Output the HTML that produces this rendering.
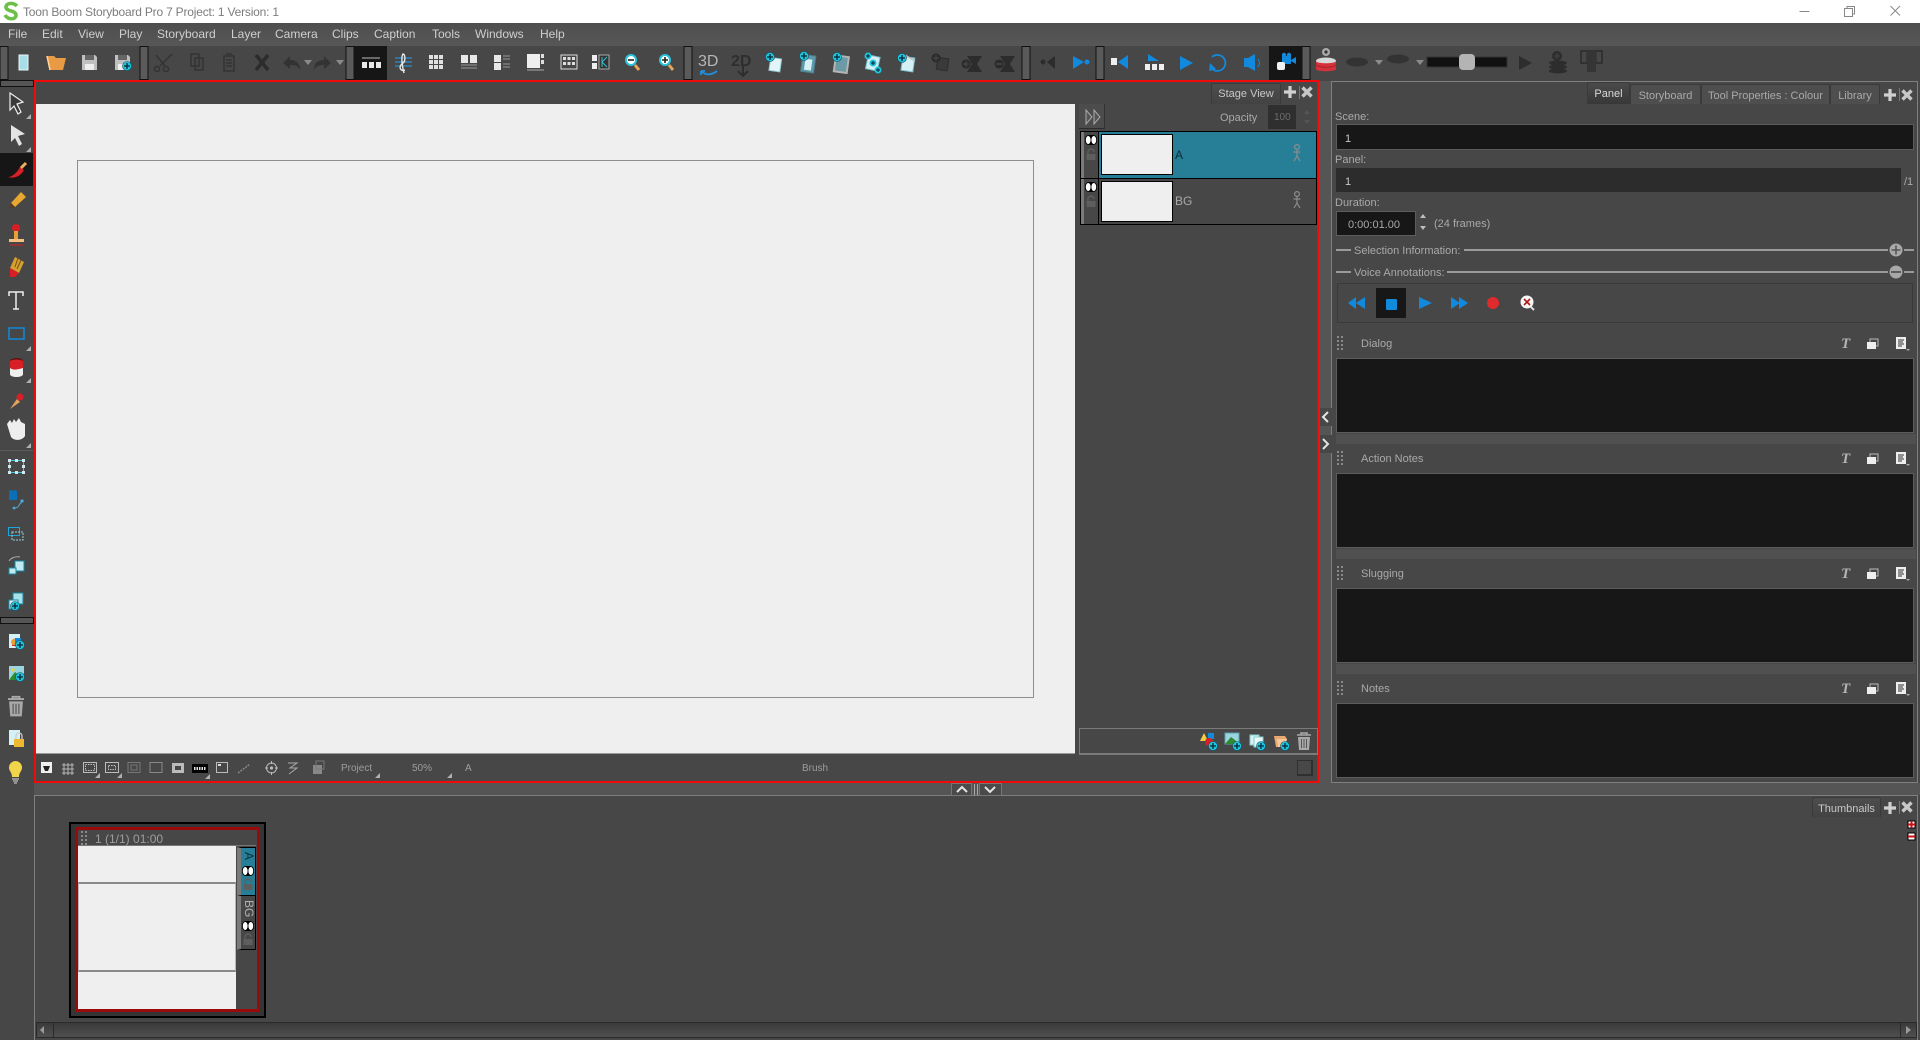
<!DOCTYPE html>
<html lang="en">
<head>
<meta charset="utf-8">
<title>Toon Boom Storyboard Pro 7</title>
<style>
html,body{margin:0;padding:0;width:1920px;height:1040px;overflow:hidden;background:#474747;font-family:"Liberation Sans",sans-serif}
.p{position:absolute;box-sizing:border-box}
.t{position:absolute;white-space:nowrap;font-size:11px;line-height:14px;color:#a9a9a9;margin-top:1px}
.m{position:absolute;top:27px;font-size:12px;line-height:14px;color:#cfcfcf;white-space:nowrap}
.tab{position:absolute;box-sizing:border-box;background:linear-gradient(#4d4d4d,#434343);border:1px solid #3a3a3a;border-bottom:0;border-radius:2px 2px 0 0;font-size:11px;color:#a9a9a9;text-align:center;white-space:nowrap}
.ta{position:absolute;box-sizing:border-box;left:1336px;width:578px;height:75px;background:#171717;border:1px solid #5c5c5c}
.bar{position:absolute;left:1336px;width:580px;height:10px;background:#505050}
svg{position:absolute;left:0;top:0}
</style>
</head>
<body>
<!-- title bar -->
<div class="p" style="left:0;top:0;width:1920px;height:23px;background:#fff"></div>
<div class="t" style="left:23px;top:4px;font-size:12px;color:#7c7c7c;letter-spacing:-.2px">Toon Boom Storyboard Pro 7 Project: 1 Version: 1</div>
<!-- menu -->
<div class="p" style="left:0;top:23px;width:1920px;height:23px;background:linear-gradient(#4e4e4e,#575757)"></div>
<div class="m" style="left:8px">File</div><div class="m" style="left:42px">Edit</div><div class="m" style="left:78px">View</div><div class="m" style="left:119px">Play</div><div class="m" style="left:157px">Storyboard</div><div class="m" style="left:231px">Layer</div><div class="m" style="left:275px">Camera</div><div class="m" style="left:332px">Clips</div><div class="m" style="left:374px">Caption</div><div class="m" style="left:432px">Tools</div><div class="m" style="left:475px">Windows</div><div class="m" style="left:540px">Help</div>
<!-- toolbar -->
<div class="p" style="left:0;top:46px;width:1920px;height:34px;background:#474747"></div>
<div class="p" style="left:354px;top:46px;width:33px;height:34px;background:#161616"></div>
<div class="p" style="left:1269px;top:46px;width:33px;height:34px;background:#161616"></div>

<!-- stage frame -->
<div class="p" style="left:34px;top:80px;width:1285px;height:703px;background:#474747;border:2px solid #f00a0a"></div>
<div class="p" style="left:36px;top:104px;width:1039px;height:650px;background:#efefef"></div>
<div class="p" style="left:77px;top:160px;width:957px;height:538px;border:1px solid #8e8e8e"></div>
<div class="p" style="left:36px;top:753px;width:1039px;height:1px;background:#999"></div>
<div class="tab" style="left:1211px;top:83px;width:70px;height:21px;line-height:21px;color:#c8c8c8">Stage View</div>
<div class="p" style="left:1079px;top:104px;width:26px;height:25px;background:#4c4c4c;border-bottom:1px solid #2c2c2c;border-right:1px solid #333"></div>
<div class="t" style="left:1220px;top:110px">Opacity</div>
<div class="p" style="left:1268px;top:105px;width:28px;height:24px;background:#2f2f2f"></div>
<div class="t" style="left:1274px;top:110px;font-size:10px;color:#6d6d6d">100</div>
<!-- layers -->
<div class="p" style="left:1080px;top:131px;width:237px;height:94px;background:#474747;border:1px solid #000"></div>
<div class="p" style="left:1081px;top:132px;width:3px;height:92px;background:#7a7a7a"></div>
<div class="p" style="left:1098px;top:132px;width:218px;height:46px;background:#267f96"></div>
<div class="p" style="left:1098px;top:132px;width:1px;height:92px;background:#000"></div>
<div class="p" style="left:1081px;top:178px;width:235px;height:1px;background:#000"></div>
<div class="p" style="left:1101px;top:134px;width:72px;height:41px;background:#efefef;border:1px solid #000"></div>
<div class="p" style="left:1101px;top:181px;width:72px;height:41px;background:#efefef;border:1px solid #000"></div>
<div class="t" style="left:1175px;top:147px;color:#0d2c36;font-size:12px">A</div>
<div class="t" style="left:1175px;top:193px;color:#a9a9a9;font-size:12px">BG</div>
<!-- layer bottom bar -->
<div class="p" style="left:1079px;top:728px;width:239px;height:27px;border:1px solid #7b7b7b;border-bottom-width:2px"></div>
<div class="p" style="left:1297px;top:760px;width:16px;height:16px;border:1px solid #2f2f2f;border-right-width:2px;border-bottom-width:2px;background:#484848"></div>
<div class="t" style="left:341px;top:761px;font-size:10px;color:#9d9d9d">Project</div>
<div class="t" style="left:412px;top:761px;font-size:10px;color:#9d9d9d">50%</div>
<div class="t" style="left:465px;top:761px;font-size:10px;color:#9d9d9d">A</div>
<div class="t" style="left:802px;top:761px;font-size:10px;color:#9d9d9d">Brush</div>

<!-- splitters -->
<div class="p" style="left:1319px;top:81px;width:12px;height:702px;background:#555"></div>
<div class="p" style="left:34px;top:783px;width:1886px;height:12px;background:#555"></div>
<div class="p" style="left:34px;top:795px;width:1884px;height:245px;background:#474747;border:1px solid #7f7f7f;border-width:1px 1px 0 1px"></div>

<!-- right panel -->
<div class="p" style="left:1331px;top:81px;width:587px;height:702px;background:#474747;border:1px solid #7f7f7f"></div>
<div class="tab" style="left:1587px;top:82px;width:43px;height:22px;line-height:22px;color:#d8d8d8;background:linear-gradient(#4a4a4a,#383838)">Panel</div>
<div class="tab" style="left:1630px;top:84px;width:71px;height:20px;line-height:22px;background:#4e4e4e">Storyboard</div>
<div class="tab" style="left:1701px;top:84px;width:129px;height:20px;line-height:22px;background:#4e4e4e">Tool Properties : Colour</div>
<div class="tab" style="left:1830px;top:84px;width:50px;height:20px;line-height:22px;background:#4e4e4e">Library</div>
<div class="t" style="left:1335px;top:109px">Scene:</div>
<div class="p" style="left:1336px;top:124px;width:578px;height:26px;background:#171717;border:1px solid #5c5c5c"></div>
<div class="t" style="left:1345px;top:131px;color:#c8c8c8">1</div>
<div class="t" style="left:1335px;top:152px">Panel:</div>
<div class="p" style="left:1336px;top:168px;width:565px;height:24px;background:#2c2c2c"></div>
<div class="t" style="left:1345px;top:174px;color:#c8c8c8">1</div>
<div class="t" style="left:1904px;top:174px">/1</div>
<div class="t" style="left:1335px;top:195px">Duration:</div>
<div class="p" style="left:1336px;top:211px;width:80px;height:25px;background:#171717;border:1px solid #5c5c5c"></div>
<div class="t" style="left:1348px;top:217px;color:#a9a9a9">0:00:01.00</div>
<div class="t" style="left:1434px;top:216px">(24 frames)</div>
<div class="t" style="left:1354px;top:243px">Selection Information:</div>
<div class="t" style="left:1354px;top:265px">Voice Annotations:</div>
<div class="p" style="left:1337px;top:283px;width:576px;height:40px;border:1px solid #3a3a3a;border-top-width:1px"></div>
<div class="p" style="left:1376px;top:288px;width:30px;height:30px;background:#171717"></div>

<div class="t" style="left:1361px;top:336px">Dialog</div>
<div class="ta" style="top:358px"></div><div class="bar" style="top:434px"></div>
<div class="t" style="left:1361px;top:451px">Action Notes</div>
<div class="ta" style="top:473px"></div><div class="bar" style="top:549px"></div>
<div class="t" style="left:1361px;top:566px">Slugging</div>
<div class="ta" style="top:588px"></div><div class="bar" style="top:664px"></div>
<div class="t" style="left:1361px;top:681px">Notes</div>
<div class="ta" style="top:703px"></div>

<!-- thumbnails -->
<div class="tab" style="left:1812px;top:797px;width:69px;height:20px;line-height:22px;color:#c8c8c8">Thumbnails</div>
<div class="p" style="left:69px;top:822px;width:197px;height:196px;background:#353535;border:2px solid #000"></div>
<div class="p" style="left:75px;top:827px;width:185px;height:185px;background:#474747;border:3px solid #9a0a0a"></div>
<div class="p" style="left:78px;top:846px;width:158px;height:163px;background:#efefef"></div>
<div class="p" style="left:78px;top:845px;width:178px;height:1px;background:#777"></div>
<div class="p" style="left:78px;top:882px;width:158px;height:90px;border-style:solid;border-color:#8a8a8a #b8b8b8;border-width:2px 1px"></div>
<div class="t" style="left:95px;top:831px;font-size:12px;color:#9d9d9d">1 (1/1) 01:00</div>
<div class="p" style="left:237px;top:847px;width:19px;height:49px;background:#267f96;border:1px solid #000;border-left:4px solid #7a7a7a"></div>
<div class="p" style="left:237px;top:895px;width:19px;height:55px;background:#474747;border:1px solid #000;border-left:4px solid #7a7a7a"></div>
<!-- scrollbar -->
<div class="p" style="left:36px;top:1022px;width:1881px;height:16px;background:linear-gradient(#3a3a3a,#4f4f4f);border:1px solid #2a2a2a"></div>
<div class="p" style="left:53px;top:1022px;width:1px;height:16px;background:#2a2a2a"></div>
<div class="p" style="left:1900px;top:1022px;width:1px;height:16px;background:#2a2a2a"></div>

<svg width="1920" height="1040" viewBox="0 0 1920 1040" xmlns="http://www.w3.org/2000/svg">
<defs>
<g id="pb"><circle r="4.5" fill="#1fc3dd" stroke="#10505f" stroke-width=".6"/><path d="M-3 0H3M0-3V3" stroke="#0a2530" stroke-width="1.3"/></g>
<g id="pbd"><circle r="4.5" fill="#2a2a2a"/><path d="M-3 0H3M0-3V3" stroke="#474747" stroke-width="1.3"/></g>
<g id="handleV"><rect x="0" y="0" width="8" height="33" fill="#5a5a5a" stroke="#111" stroke-width="1"/></g>
<g id="tri"><path d="M5 0V5H0Z" fill="#b0b0b0"/></g>
<g id="eye"><rect x="-6" y="-5" width="12" height="10" rx="4" fill="#000"/><ellipse cx="-2.8" cy="0" rx="2.4" ry="4" fill="#fff"/><ellipse cx="2.8" cy="0" rx="2.4" ry="4" fill="#fff"/></g>
<g id="lock"><rect x="-4.5" y="-1" width="9" height="6" fill="#5e5e5e"/><path d="M-3-1V-3A3 3 0 0 1 3-3" fill="none" stroke="#5e5e5e" stroke-width="1.4"/></g>
<g id="man" fill="none" stroke="#8d8d8d" stroke-width="1.2"><circle cy="-6" r="2.4"/><path d="M0-3.5V3M-3.5-1H3.5M0 3L-3 8M0 3L3 8"/></g>
<g id="plusW"><path d="M-6 0H6M0-6V6" stroke="#d0d0d0" stroke-width="3.2"/></g>
<g id="xW"><path d="M-4.500-4.500L4.500 4.500M4.500-4.500L-4.500 4.500" stroke="#c8c8c8" stroke-width="3.4"/></g>
<g id="T"><text x="-5" y="5" font-family="Liberation Serif,serif" font-size="15" font-style="italic" font-weight="700" fill="#b4b4b4">T</text></g>
<g id="win"><rect x="-3" y="-5" width="8" height="7" fill="none" stroke="#bbb"/><rect x="-6" y="-2" width="9" height="7" fill="#eee"/></g>
<g id="docI"><rect x="-5" y="-6" width="10" height="12" fill="#eee"/><path d="M-3-3H3M-3-1H2M-3 1H3M-3 3H1" stroke="#333"/><path d="M5 6H9L7 8Z" fill="#aaa"/></g>
<g id="grip" fill="#8a8a8a"><rect x="0" y="0" width="2" height="2"/><rect x="4" y="0" width="2" height="2"/><rect x="0" y="4" width="2" height="2"/><rect x="4" y="4" width="2" height="2"/><rect x="0" y="8" width="2" height="2"/><rect x="4" y="8" width="2" height="2"/><rect x="0" y="12" width="2" height="2"/><rect x="4" y="12" width="2" height="2"/></g>
<g id="trash"><path d="M-7-6H7M-3-6V-8H3V-6" stroke="#a9a9a9" stroke-width="1.6" fill="none"/><path d="M-6-4H6L5 9H-5Z" fill="#a9a9a9"/><path d="M-2.500-2V7M0-2V7M2.500-2V7" stroke="#555"/></g>
</defs>

<!-- logo -->
<path d="M17 6C13 2 6 3 6 7C6 12 16 10 16 15C16 20 8 20 5 15" fill="none" stroke="#6cc04a" stroke-width="3.6"/>
<!-- window controls -->
<path d="M1799.500 11.500H1809.500" stroke="#888"/>
<path d="M1844.500 8.500H1852.500V16.500H1844.500ZM1847 8.500V6.500H1854.500V14H1852.500" fill="none" stroke="#888"/>
<path d="M1890.500 6L1900 15.500M1900 6L1890.500 15.500" stroke="#888"/>

<!-- toolbar handles -->
<use href="#handleV" x="0" y="46.500"/><use href="#handleV" x="140" y="46.500"/><use href="#handleV" x="346" y="46.500"/><use href="#handleV" x="684" y="46.500"/><use href="#handleV" x="1022" y="46.500"/><use href="#handleV" x="1096" y="46.500"/><use href="#handleV" x="1302" y="46.500"/>

<!-- file icons -->
<rect x="19" y="55" width="9" height="15" fill="#a8dde8" stroke="#eaf7fa"/>
<path d="M47 56H54L56 58H66L63 70H50Z" fill="#e89a45"/><path d="M47 56L50 70" stroke="#ffd6a0" stroke-width="1.500"/>
<g fill="#c0c0c0"><path d="M82 55H95L97 57V70H82Z"/></g><rect x="85" y="55" width="9" height="5" fill="#666"/><rect x="85" y="64" width="9" height="6" fill="#eee"/>
<path d="M115 55H128L130 57V70H115Z" fill="#c0c0c0"/><rect x="118" y="55" width="9" height="5" fill="#666"/><rect x="118" y="64" width="9" height="6" fill="#eee"/><use href="#pb" x="127" y="66"/>
<!-- cut copy paste delete undo redo (disabled) -->
<g fill="none" stroke="#333" stroke-width="1.500"><path d="M172 54L160 66M156 55L165 66"/><circle cx="157" cy="69" r="2.600"/><circle cx="166" cy="69" r="2.600"/>
<rect x="191" y="54" width="8" height="12"/><rect x="195" y="58" width="8" height="12"/>
<rect x="224" y="56" width="10" height="15"/><path d="M226 54H232M226 60H232M226 63H232M226 66H232"/></g>
<path d="M256 55L268 70M268 55L256 70" stroke="#2c2c2c" stroke-width="3.600"/>
<path d="M283 63L290 56V60C296 60 300 63 300 70C298 66 295 65 290 65V69Z" fill="#333"/><path d="M304 60H312L308 65Z" fill="#8a8a8a"/>
<path d="M331 63L324 56V60C318 60 314 63 314 70C316 66 319 65 324 65V69Z" fill="#333"/><path d="M336 60H344L340 65Z" fill="#8a8a8a"/>
<!-- view icons -->
<path d="M362 58H380" stroke="#bbb" stroke-width="1"/><g fill="#e8e8e8"><rect x="362" y="62" width="5" height="6"/><rect x="369" y="62" width="5" height="6"/><rect x="376" y="62" width="5" height="6"/></g>
<path d="M395 58H412M395 62H412M395 66H412" stroke="#2a8fd0" stroke-width="1.200"/><path d="M405 70C400 72 398 66 403 63C406 61 405 54 403 54C401 56 402 66 404 73" stroke="#e8e8e8" fill="none" stroke-width="1.400"/>
<g fill="#e0e0e0"><rect x="429" y="55" width="4" height="4"/><rect x="434" y="55" width="4" height="4"/><rect x="439" y="55" width="4" height="4"/><rect x="429" y="60" width="4" height="4"/><rect x="434" y="60" width="4" height="4"/><rect x="439" y="60" width="4" height="4"/><rect x="429" y="65" width="4" height="4"/><rect x="434" y="65" width="4" height="4"/><rect x="439" y="65" width="4" height="4"/></g>
<g fill="#e8e8e8"><rect x="461" y="55" width="7" height="8"/><rect x="470" y="55" width="7" height="8"/></g><path d="M461 65H477M461 68H477" stroke="#999"/>
<g fill="#e8e8e8"><rect x="494" y="55" width="7" height="7"/><rect x="494" y="63" width="7" height="7"/></g><path d="M503 56H510M503 59H510M503 64H510M503 67H510" stroke="#999"/>
<rect x="527" y="54" width="13" height="14" fill="#eee"/><rect x="541" y="54" width="3" height="4" fill="#ddd"/><rect x="541" y="60" width="3" height="4" fill="#ddd"/><path d="M527 70H544" stroke="#aaa"/>
<rect x="561" y="55" width="16" height="14" fill="none" stroke="#ddd"/><g fill="#ddd"><rect x="563" y="57" width="3" height="3"/><rect x="567.500" y="57" width="3" height="3"/><rect x="572" y="57" width="3" height="3"/><rect x="563" y="62" width="3" height="3"/><rect x="567.500" y="62" width="3" height="3"/><rect x="572" y="62" width="3" height="3"/></g>
<rect x="592" y="55" width="5" height="6" fill="#eee"/><rect x="592" y="63" width="5" height="6" fill="#eee"/><rect x="599" y="55" width="10" height="14" fill="#333" stroke="#aaa"/><path d="M602 57V67M607 57L602 62L607 67" stroke="#30c0d0" fill="none"/>
<!-- zoom -->
<circle cx="631" cy="60" r="5" fill="#fff" stroke="#29c4de" stroke-width="2"/><path d="M628 60H634" stroke="#222" stroke-width="1.600"/><path d="M635 65L639 70" stroke="#e6a45a" stroke-width="3"/>
<circle cx="665" cy="60" r="5" fill="#fff" stroke="#29c4de" stroke-width="2"/><path d="M662 60H668M665 57V63" stroke="#222" stroke-width="1.600"/><path d="M669 65L673 70" stroke="#e6a45a" stroke-width="3"/>
<!-- 3D / 2D -->
<text x="698" y="66" font-family="Liberation Sans,sans-serif" font-size="16" fill="#b6b6b6">3D</text><path d="M701 71C706 76 712 75 717 71M701 71V75M701 71H705" stroke="#1f8fe0" stroke-width="1.800" fill="none"/>
<text x="731" y="66" font-family="Liberation Sans,sans-serif" font-size="16" font-weight="700" fill="#2e2e2e">2D</text><path d="M743 66V75M738 71L743 76L748 71" stroke="#2e2e2e" stroke-width="2" fill="none"/>
<!-- add panel icons -->
<g transform="translate(774 63) rotate(8)"><rect x="-4" y="-5" width="11" height="13" fill="#e4f5f8" stroke="#8fc8d2"/></g><use href="#pb" x="770" y="57"/>
<g transform="translate(807 62) rotate(8)"><rect x="-5" y="-7" width="13" height="17" fill="#5f9aaa" stroke="#4a7f8d"/><rect x="-2" y="-3" width="7" height="11" fill="#d5f1f6"/></g><use href="#pb" x="804" y="56"/>
<g transform="translate(840 63) rotate(8)"><rect x="-5" y="-7" width="13" height="16" fill="#6c9aa5" stroke="#b4b4b4" stroke-width="2"/></g><use href="#pb" x="837" y="57"/>
<g transform="translate(873 62) rotate(12)"><rect x="-6" y="-6" width="12" height="14" fill="#d5f1f6" stroke="#78c0cc"/></g><circle cx="868" cy="56" r="3.500" fill="#1fc3dd"/><circle cx="873" cy="63" r="3.500" fill="#1fc3dd"/><circle cx="878" cy="70" r="3.500" fill="#1fc3dd"/><path d="M866 56H870M868 54V58M871 63H875M873 61V65M876 70H880M878 68V72" stroke="#0a2530"/>
<g transform="translate(907 63) rotate(8)"><rect x="-5" y="-6" width="12" height="14" fill="#d5f1f6" stroke="#78c0cc"/></g><path d="M905 55L915 61" stroke="#bbb" stroke-width="1.500"/><use href="#pb" x="902" y="58"/>
<g transform="translate(942 64) rotate(8)"><rect x="-5" y="-6" width="11" height="12" fill="#3a3a3a" stroke="#2d2d2d"/></g><use href="#pbd" x="936" y="58"/>
<path d="M967 56H982L977 64L982 72H967L972 64Z" fill="#2c2c2c"/><use href="#pbd" x="966" y="64"/>
<path d="M1000 56H1015L1010 64L1015 72H1000L1005 64Z" fill="#2c2c2c"/><circle cx="999" cy="64" r="4.500" fill="#2a2a2a"/><path d="M996 64H1002" stroke="#474747" stroke-width="1.500"/>
<!-- transport -->
<path d="M1047 62L1055 56V69Z" fill="#2c2c2c"/><circle cx="1043" cy="62" r="2.500" fill="#2c2c2c"/>
<path d="M1073 56L1084 62L1073 69Z" fill="#1189dc"/><circle cx="1087" cy="62" r="2.500" fill="#1189dc"/>
<rect x="1111" y="58" width="6" height="7" fill="#eee"/><path d="M1128 55V69L1118 62Z" fill="#1189dc"/>
<path d="M1148 54L1159 61H1148Z" fill="#1189dc"/><g fill="#eee"><rect x="1145" y="64" width="5" height="6"/><rect x="1152" y="64" width="5" height="6"/><rect x="1159" y="64" width="5" height="6"/></g>
<path d="M1180 56L1193 63L1180 70Z" fill="#1189dc"/>
<path d="M1212 57A8 8 0 1 1 1210 66" fill="none" stroke="#1189dc" stroke-width="1.800"/><path d="M1209 71L1210 63L1216 69Z" fill="#1189dc"/>
<path d="M1244 58H1248L1255 54V71L1248 67H1244Z" fill="#1189dc"/><path d="M1258 59C1260 62 1260 64 1258 67" stroke="#1189dc" fill="none"/>
<!-- camera icon -->
<rect x="1282" y="56" width="9" height="8" fill="#1189dc"/><circle cx="1284" cy="55" r="2.200" fill="#1189dc"/><circle cx="1289" cy="55" r="2.200" fill="#1189dc"/><path d="M1291 60L1296 57V64L1291 61Z" fill="#1189dc"/><rect x="1277" y="62" width="8" height="8" rx="2" fill="#f0f0f0"/>
<!-- onion skin -->
<circle cx="1326" cy="52" r="4" fill="#aaa"/><circle cx="1326" cy="52" r="1.600" fill="#333"/><ellipse cx="1326" cy="61" rx="10" ry="3.500" fill="#d8d8d8"/><path d="M1316 61C1316 64 1336 64 1336 61V69C1336 72 1316 72 1316 69Z" fill="#d4323a"/><path d="M1316 65C1320 68 1332 68 1336 65" stroke="#a81e25" fill="none"/>
<ellipse cx="1357" cy="62" rx="11" ry="4.500" fill="#333"/><path d="M1375 60H1383L1379 65Z" fill="#8a8a8a"/>
<ellipse cx="1398" cy="59" rx="11" ry="4.500" fill="#333"/><path d="M1416 60H1424L1420 65Z" fill="#8a8a8a"/>
<rect x="1427" y="57" width="80" height="10" fill="#111" stroke="#333"/><rect x="1459" y="54" width="16" height="16" rx="4" fill="#b4b4b4"/>
<path d="M1519 56L1532 63L1519 70Z" fill="#2d2d2d"/>
<circle cx="1557" cy="56" r="5" fill="#2d2d2d"/><path d="M1554 56H1560M1557 53V59" stroke="#474747"/><ellipse cx="1558" cy="63" rx="9" ry="2.500" fill="#2d2d2d"/><ellipse cx="1558" cy="67" rx="9" ry="2.500" fill="#2d2d2d"/><ellipse cx="1558" cy="71" rx="9" ry="2.500" fill="#2d2d2d"/>
<rect x="1581" y="51" width="21" height="12" fill="none" stroke="#2b2b2b" stroke-width="1.500"/><path d="M1587 51V63M1596 51V63" stroke="#2b2b2b"/><rect x="1587" y="51" width="9" height="21" fill="#353535"/>

<!-- left toolbar -->
<rect x="0.500" y="80.500" width="33" height="6" fill="#555" stroke="#111"/>
<rect x="0" y="153" width="33" height="33" fill="#161616"/>
<path d="M10 93L23 102L17 104L21 112L18 114L14 106L10 110Z" fill="#3a3a3a" stroke="#eee" stroke-width="1.200"/>
<path d="M11 125L25 134L18 136L22 144L19 146L15 138L11 142Z" fill="#e4e4e4"/>
<use href="#tri" x="26" y="114"/><use href="#tri" x="26" y="147"/><use href="#tri" x="26" y="346"/><use href="#tri" x="26" y="378"/><use href="#tri" x="26" y="443"/>
<path d="M8 177C12 177 17 173 20 167L24 170C21 176 14 179 8 177Z" fill="#d81f26"/><path d="M21 168L26 163" stroke="#e8b060" stroke-width="3"/>
<path d="M11 203L21 192L26 197L15 207Z" fill="#e8a830"/><path d="M11 203L15 207L9 209Z" fill="#5a3a20"/>
<circle cx="16" cy="228" r="4" fill="#d81f26"/><rect x="14" y="231" width="4" height="8" fill="#e8a030"/><rect x="9" y="239" width="15" height="3" fill="#f4c080"/><path d="M10 245H23" stroke="#d81f26"/>
<path d="M15 257L24 262L19 273L10 268Z" fill="#d5a030"/><path d="M10 268L19 273L15 277H10Z" fill="#d81f26"/><path d="M18 258L15 267M21 260L17 269" stroke="#765018"/>
<path d="M9 296V292H23V296M16 292V309M13 309H19" stroke="#eee" stroke-width="1.500" fill="none"/>
<rect x="9" y="328" width="15" height="11" fill="none" stroke="#1189dc" stroke-width="1.500"/>
<path d="M10 361V374C10 378 23 378 23 374V361Z" fill="#efefef"/><ellipse cx="16.500" cy="361" rx="6.500" ry="3" fill="#5a1010"/><path d="M10 361V368C14 371 19 369 23 368V361C20 359 13 359 10 361Z" fill="#d81f26"/>
<path d="M10 409L17 399L20 402Z" fill="#e6a45a"/><circle cx="20" cy="397" r="3.500" fill="#d81f26"/>
<path d="M7 424L10 420L12 423L14 419L16 422L19 418L21 422L25 424V436C22 441 14 441 11 437Z" fill="#eee"/>
<path d="M0 450.500H33" stroke="#5c5c5c"/>
<rect x="9.500" y="460.500" width="14" height="12" fill="none" stroke="#43c9df"/><g fill="#cfe8ee"><rect x="8" y="459" width="3" height="3"/><rect x="15" y="459" width="3" height="3"/><rect x="22" y="459" width="3" height="3"/><rect x="8" y="465" width="3" height="3"/><rect x="22" y="465" width="3" height="3"/><rect x="8" y="471" width="3" height="3"/><rect x="15" y="471" width="3" height="3"/><rect x="22" y="471" width="3" height="3"/></g>
<rect x="9" y="493" width="8" height="7" fill="#0a70b8"/><circle cx="11" cy="492" r="2" fill="#0a70b8"/><circle cx="15" cy="492" r="2" fill="#0a70b8"/><path d="M14 508C20 508 18 504 22 502" fill="none" stroke="#4fa9d8"/><circle cx="22" cy="501" r="1.600" fill="#4fa9d8"/><circle cx="14" cy="508" r="1.400" fill="#4fa9d8"/>
<rect x="8.500" y="527.500" width="11" height="8" fill="none" stroke="#1da6dc"/><rect x="12" y="532" width="11" height="8" fill="none" stroke="#9cd" stroke-dasharray="2 1"/>
<path d="M9 561C11 558 15 556 20 557" fill="none" stroke="#aaa"/><rect x="15" y="561" width="9" height="10" fill="#bfeaf2" stroke="#158aa0"/><rect x="9" y="568" width="7" height="6" fill="#bfeaf2" stroke="#158aa0"/>
<rect x="13" y="593" width="10" height="11" fill="#a9dfe9" stroke="#158aa0"/><rect x="9" y="600" width="9" height="9" fill="#d5f1f6" stroke="#158aa0"/><use href="#pb" x="15" y="606"/>
<rect x="0.500" y="617.500" width="33" height="6" fill="#555" stroke="#111"/>
<rect x="9" y="634" width="11" height="14" fill="#d5f1f6"/><path d="M12 646L14 638L17 646Z" fill="#d81f26"/><circle cx="14" cy="642" r="3" fill="#e8a030"/><rect x="15" y="638" width="6" height="6" fill="#1189dc"/><use href="#pb" x="20" y="645"/>
<rect x="9" y="666" width="15" height="14" fill="#9ad4e0"/><path d="M9 680L15 672L20 676L24 680Z" fill="#2f8a2f"/><circle cx="13" cy="670" r="1.600" fill="#f0d040"/><use href="#pb" x="20" y="677"/>
<g transform="translate(16 706) scale(1.150)"><use href="#trash"/></g>
<rect x="9" y="730" width="11" height="15" fill="#d5f1f6"/><rect x="14" y="739" width="10" height="8" fill="#f0b830"/><path d="M16 739V736A3 3 0 0 1 22 736V739" fill="none" stroke="#ccc" stroke-width="1.300"/>
<path d="M10 771A6.500 6.500 0 1 1 21 771C19 774 19 776 19 777H12C12 776 12 774 10 771Z" fill="#f2d44a"/><path d="M12 779H19M13 781H18M14 783H17" stroke="#bbb" stroke-width="1.200"/>

<!-- stage tab icons -->
<use href="#plusW" x="1290" y="92"/><path d="M1299.500 86V99" stroke="#777"/><use href="#xW" x="1307" y="92"/>
<path d="M1086 110V124L1092 117ZM1094 110V124L1100 117Z" fill="#555" stroke="#aaa" stroke-width="1"/>
<path d="M1304 114L1307 110L1310 114ZM1304 120L1307 124L1310 120Z" fill="#555"/>
<use href="#eye" x="1091" y="140"/><use href="#lock" x="1091" y="155"/>
<use href="#eye" x="1091" y="187"/><use href="#lock" x="1091" y="202"/>
<use href="#man" x="1297" y="153" /><use href="#man" x="1297" y="200"/>

<!-- stage bottom icons -->
<g transform="translate(0 1)">
<rect x="41" y="761" width="11" height="11" fill="#eee"/><path d="M43 765H50L48 770H45Z" fill="#222"/>
<path d="M64 762V774M68 762V774M72 762V774M62 764H74M62 768H74M62 772H74" stroke="#b5b5b5" fill="none"/>
<rect x="83.500" y="761.500" width="13" height="10" fill="none" stroke="#bbb"/><rect x="85.500" y="763.500" width="9" height="6" fill="none" stroke="#bbb" stroke-dasharray="1.500 1"/><use href="#tri" x="95" y="772"/>
<rect x="105.500" y="761.500" width="13" height="10" fill="none" stroke="#bbb"/><rect x="108.500" y="764.500" width="7" height="4" fill="none" stroke="#bbb" stroke-dasharray="1.500 1"/><use href="#tri" x="117" y="772"/>
<rect x="128" y="761.500" width="12" height="10" fill="none" stroke="#777"/><rect x="131" y="764" width="6" height="5" fill="none" stroke="#777"/>
<rect x="150" y="761.500" width="12" height="10" fill="none" stroke="#888"/>
<rect x="172" y="762" width="12" height="10" fill="#bbb"/><rect x="175" y="765" width="6" height="4" fill="#474747"/>
<rect x="192" y="763" width="16" height="9" fill="#000"/><path d="M194 767.500H206" stroke="#ddd" stroke-width="3" stroke-dasharray="1.500 1"/><use href="#tri" x="205" y="773"/>
<rect x="216.500" y="761.500" width="11" height="10" fill="none" stroke="#bbb"/><rect x="218" y="763" width="3" height="2" fill="#ddd"/>
<path d="M238 772L250 763" stroke="#888" stroke-width="1.500" stroke-dasharray="2 1"/>
<circle cx="271.500" cy="767" r="5" fill="none" stroke="#bbb"/><circle cx="271.500" cy="767" r="1.600" fill="#bbb"/><path d="M271.500 760V763M271.500 771V774M265 767H268M275 767H278" stroke="#bbb"/>
<path d="M288 762H297L290 767H297L289 773" fill="none" stroke="#aaa"/>
<rect x="313" y="764" width="9" height="9" fill="#888"/><rect x="316" y="760" width="8" height="8" fill="none" stroke="#777"/>
<use href="#tri" x="375" y="772"/><use href="#tri" x="447" y="772"/>
</g>

<!-- layer bottom icons -->
<path d="M1200 741L1204 733L1208 741Z" fill="#f0d040"/><rect x="1208" y="733" width="6" height="6" fill="#1189dc"/><circle cx="1209" cy="742" r="4" fill="#d81f26"/><use href="#pb" x="1213" y="746"/>
<rect x="1225" y="733" width="14" height="11" fill="#9ad4e0" stroke="#5d9fb0"/><path d="M1225 744L1231 737L1235 740L1239 744Z" fill="#2f8a2f"/><use href="#pb" x="1237" y="746"/>
<rect x="1250" y="735" width="9" height="10" fill="#d5f1f6" stroke="#8cc"/><rect x="1254" y="737" width="9" height="10" fill="#eaf8fb" stroke="#8cc"/><use href="#pb" x="1261" y="746"/>
<path d="M1274 736H1285L1287 739L1284 747H1276Z" fill="#e8a870"/><path d="M1277 739H1287L1285 747H1278Z" fill="#f6c89c"/><use href="#pb" x="1285" y="746"/>
<use href="#trash" x="1304" y="741"/>

<!-- panel tab icons -->
<use href="#plusW" x="1890" y="95"/><path d="M1899.500 88V101" stroke="#777"/><use href="#xW" x="1907" y="95"/>
<rect x="1320" y="408" width="12" height="18" fill="#474747"/><path d="M1328 412L1323 417L1328 422" fill="none" stroke="#e4e4e4" stroke-width="2"/>
<rect x="1320" y="435" width="12" height="18" fill="#474747"/><path d="M1323 439L1328 444L1323 449" fill="none" stroke="#e4e4e4" stroke-width="2"/>

<!-- spinner -->
<path d="M1420 218L1423 214L1426 218ZM1420 226L1423 230L1426 226Z" fill="#bdbdbd"/>
<!-- section lines -->
<g stroke="#9a9a9a" stroke-width="2"><path d="M1336 250H1351M1464 250H1888M1904 250H1914M1336 272H1351M1447 272H1888M1904 272H1914"/></g>
<circle cx="1896" cy="250" r="6.500" fill="#a8a8a8"/><path d="M1891.500 250H1900.500M1896 245.500V254.500" stroke="#555" stroke-width="1.600"/>
<circle cx="1896" cy="272" r="6.500" fill="#a8a8a8"/><path d="M1891 272H1901" stroke="#555" stroke-width="1.800"/>
<!-- voice -->
<path d="M1365 297V309L1356 303ZM1356 297V309L1348 303Z" fill="#1189dc"/>
<rect x="1386" y="299" width="11" height="11" rx="1" fill="#1189dc"/>
<path d="M1419 297L1432 303L1419 309Z" fill="#1189dc"/>
<path d="M1451 297L1460 303L1451 309ZM1459 297L1468 303L1459 309Z" fill="#1189dc"/>
<circle cx="1493" cy="303" r="6" fill="#df2a2e"/>
<circle cx="1527" cy="302" r="6.500" fill="#f6f6f6"/><path d="M1531 307L1534 310" stroke="#ddd" stroke-width="2"/><path d="M1524 299L1530 305M1530 299L1524 305" stroke="#b01616" stroke-width="1.600"/>
<!-- section rows -->
<use href="#grip" x="1337" y="336"/><use href="#T" x="1846" y="343"/><use href="#win" x="1873" y="344"/><use href="#docI" x="1901" y="343"/>
<use href="#grip" x="1337" y="451"/><use href="#T" x="1846" y="458"/><use href="#win" x="1873" y="459"/><use href="#docI" x="1901" y="458"/>
<use href="#grip" x="1337" y="566"/><use href="#T" x="1846" y="573"/><use href="#win" x="1873" y="574"/><use href="#docI" x="1901" y="573"/>
<use href="#grip" x="1337" y="681"/><use href="#T" x="1846" y="688"/><use href="#win" x="1873" y="689"/><use href="#docI" x="1901" y="688"/>

<!-- center splitter arrows -->
<g fill="#4a4a4a" stroke="#777"><rect x="951.500" y="783.500" width="20" height="12"/><rect x="979.500" y="783.500" width="22" height="12"/></g>
<path d="M957 792L962 787L967 792M985 787L990 792L995 787" fill="none" stroke="#e4e4e4" stroke-width="2"/>
<path d="M974.500 784V795M977.500 784V795" stroke="#aaa"/>

<!-- thumbnails chrome -->
<use href="#plusW" x="1890" y="808"/><path d="M1899.500 801V814" stroke="#777"/><use href="#xW" x="1907" y="807"/>
<rect x="1908" y="821" width="7" height="7" fill="#fff" stroke="#000"/><path d="M1908 824.500H1915M1911.500 821V828" stroke="#c80f16" stroke-width="2"/>
<rect x="1908" y="833" width="7" height="7" fill="#fff" stroke="#000"/><path d="M1908 836.500H1915" stroke="#c80f16" stroke-width="2"/>
<use href="#grip" x="81" y="831"/>
<text transform="translate(245 852) rotate(90)" font-family="Liberation Sans,sans-serif" font-size="12" fill="#0d2c36">A</text>
<text transform="translate(245 900) rotate(90)" font-family="Liberation Sans,sans-serif" font-size="12" fill="#b0b0b0">BG</text>
<use href="#eye" x="248" y="871"/><use href="#eye" x="248" y="926"/>
<use href="#lock" x="248" y="885"/><use href="#lock" x="248" y="940"/>
<path d="M44 1026V1034L40 1030Z" fill="#9a9a9a"/><path d="M1906 1026V1034L1911 1030Z" fill="#9a9a9a"/>
</svg>
</body>
</html>
